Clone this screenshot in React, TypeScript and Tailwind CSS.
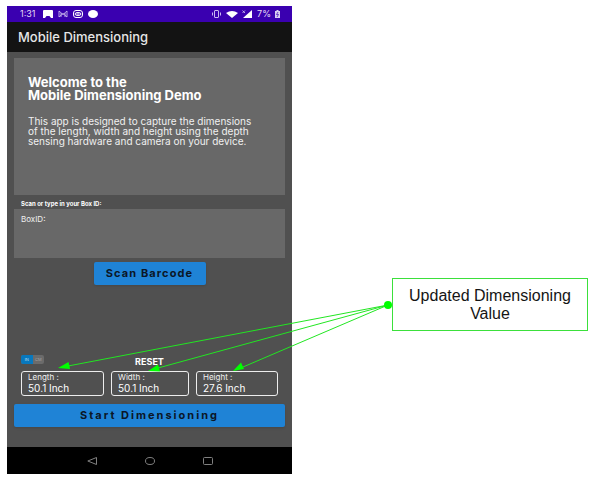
import { useState } from "react";

const readings = [
  { id: "length", label: "Length :", value: "50.1 Inch" },
  { id: "width", label: "Width :", value: "50.1 Inch" },
  { id: "height", label: "Height :", value: "27.6 Inch" },
];

function StatusBar() {
  return (
    <div className="flex h-4 items-center justify-between bg-[#3a00b0] pr-3 pl-[13px] text-[9px] leading-4 text-[#e4dcf5]">
      <div className="flex items-center gap-[5px]">
        <span className="pr-[3px]">1:31</span>
        <svg className="h-2 w-2.5" viewBox="0 0 10 8" aria-hidden="true">
          <path d="M1 0h8q1 0 1 1v7H8L6.500 6h-3L2 8H0V1q0-1 1-1z" fill="#fff" />
        </svg>
        <svg className="h-2 w-2.5" viewBox="0 0 10 8" fill="none" stroke="#d8ccf2" strokeWidth=".8" aria-hidden="true">
          <path d="M1 7V1l4 3.500L9 1v6M3 7V3M7 7V3M1 7l4-3.500L9 7" />
        </svg>
        <svg className="h-2 w-2.5" viewBox="0 0 10 8" fill="none" stroke="#fff" aria-hidden="true">
          <rect x=".5" y=".5" width="9" height="7" rx="2.500" />
          <ellipse cx="5" cy="4" rx="3" ry="1.500" />
          <path d="M3.500 4h3" />
        </svg>
        <svg className="h-2 w-2.5" viewBox="0 0 10 8" aria-hidden="true">
          <ellipse cx="5" cy="4" rx="5" ry="4" fill="#fff" />
        </svg>
      </div>
      <div className="flex items-center gap-1">
        <svg className="mr-px h-2 w-[9px]" viewBox="0 0 9 8" fill="none" stroke="#c9b8f0" aria-hidden="true">
          <rect x="2.500" y=".5" width="4" height="7" rx=".5" />
          <path d="M.5 2.500v3M8.500 2.500v3" />
        </svg>
        <svg className="h-[7px] w-3" viewBox="0 0 12 7" aria-hidden="true">
          <path d="M0 2Q6-2 12 2L6 7z" fill="#fff" />
        </svg>
        <svg className="h-2 w-[10px]" viewBox="0 0 10 8" aria-hidden="true">
          <path d="M10 0v8H1z" fill="#fff" />
          <path d="M.5.5l2.500 2.500M3 .5L.5 3" stroke="#d8ccf2" strokeWidth=".8" />
        </svg>
        <span className="pl-px">7%</span>
        <svg className="h-2 w-[5px]" viewBox="0 0 5 8" aria-hidden="true">
          <path d="M0 1h1.500V0h2v1H5v7H0z" fill="#d8ccf2" />
          <path d="M3 2L1.500 4.500h2L2 7" stroke="#3a00b0" strokeWidth=".7" fill="none" />
        </svg>
      </div>
    </div>
  );
}

function UnitSwitch() {
  const [unit, setUnit] = useState("IN");
  return (
    <fieldset className="flex h-[9px] w-[23px] overflow-hidden rounded-xs bg-[#6b6b6b] text-[4px] leading-[9px]">
      {["IN", "CM"].map((name) => (
        <label
          key={name}
          className={
            unit === name
              ? "relative flex-1 bg-[#0878bd] text-center text-[#b9def5]"
              : "relative flex-1 text-center text-[#a5a5a5]"
          }
        >
          <input
            type="radio"
            name="unit"
            className="sr-only"
            checked={unit === name}
            onChange={() => setUnit(name)}
          />
          {name}
        </label>
      ))}
    </fieldset>
  );
}

function Phone() {
  return (
    <div className="flex flex-col bg-[#505050] font-[Inter,Roboto,sans-serif] text-white">
      <StatusBar />
      <header className="flex h-[30px] items-center bg-[#131313] px-[11px] pt-0.5">
        <h1 className="text-[13px] font-medium text-[#e6e6e6]">Mobile Dimensioning</h1>
      </header>
      <main className="flex flex-col px-[7px] pt-1.5 pb-5">
        <section className="h-[137px] bg-[#686868] px-3.5 pt-[18px]">
          <h2 className="text-[13px] leading-[13px] font-bold whitespace-nowrap">
            Welcome to the
            <br />
            Mobile Dimensioning Demo
          </h2>
          <p className="pt-3.5 text-[10px] leading-[10px] whitespace-nowrap text-[#f0f0f0]">
            This app is designed to capture the dimensions
            <br />
            of the length, width and height using the depth
            <br />
            sensing hardware and camera on your device.
          </p>
        </section>
        <label htmlFor="box-id" className="px-[7px] pt-1 text-[6px] leading-[10px] font-bold">
          Scan or type in your Box ID:
        </label>
        <textarea
          id="box-id"
          placeholder="BoxID:"
          className="block h-[49px] w-full resize-none bg-[#686868] px-[7px] pt-1.5 text-[8px] leading-2 outline-none placeholder:text-[#f0f0f0]"
        />
        <button className="mt-1 h-[23px] w-28 self-center rounded-xs bg-[#1f83d6] text-[11px] font-bold tracking-widest whitespace-nowrap text-[#0b1626] shadow-sm">
          Scan Barcode
        </button>
        <div className="mt-[70px] grid h-4 grid-cols-3 px-[7px]">
          <UnitSwitch />
          <button className="self-start justify-self-center text-[9px] leading-[14px] font-bold">RESET</button>
        </div>
        <div className="grid grid-cols-[83fr_78fr_82fr] gap-[7px] px-[7px]">
          {readings.map((r) => (
            <div key={r.id} className="flex h-[25px] flex-col rounded-[3px] border border-[#ededed] px-1.5 whitespace-nowrap">
              <label htmlFor={r.id} className="text-[8px] leading-[10px] text-[#f0f0f0]">
                {r.label}
              </label>
              <output id={r.id} className="text-[10px] leading-3">
                {r.value}
              </output>
            </div>
          ))}
        </div>
        <button className="mt-2 h-[23px] rounded-xs bg-[#1f83d6] text-[11px] font-bold tracking-[2px] text-[#0b1626] shadow-sm">
          Start Dimensioning
        </button>
      </main>
      <nav className="flex h-[27px] items-center justify-center gap-12 bg-black text-[#808080]">
        <button aria-label="Back">
          <svg className="h-2 w-2.5" viewBox="0 0 10 8" fill="none" stroke="currentColor">
            <path d="M9.500.5v7L.8 4z" />
          </svg>
        </button>
        <button aria-label="Home">
          <svg className="h-2 w-2.5" viewBox="0 0 10 8" fill="none" stroke="currentColor">
            <ellipse cx="5" cy="4" rx="4.500" ry="3.500" />
          </svg>
        </button>
        <button aria-label="Recent apps">
          <svg className="h-2 w-2.5" viewBox="0 0 10 8" fill="none" stroke="currentColor">
            <rect x=".5" y=".5" width="9" height="7" rx="1" />
          </svg>
        </button>
      </nav>
    </div>
  );
}

function Arrows() {
  return (
    <svg
      className="pointer-events-none absolute inset-0 h-full w-full"
      viewBox="0 0 581 468"
      preserveAspectRatio="none"
      aria-hidden="true"
    >
      <g stroke="#22e622" strokeWidth="1">
        <path d="M381 299L61 360M381 299L151 362M381 299L236 361" fill="none" />
      </g>
      <g fill="#00ff00">
        <circle cx="381" cy="299" r="4" />
        <path d="M51 362l10.500-6 1.500 7z" />
        <path d="M141 365l10-6.500 2 7z" />
        <path d="M226 365l8-8.500 3 6.500z" />
      </g>
    </svg>
  );
}

export default function App() {
  return (
    <div className="min-h-screen bg-white pt-1.5 pr-[9px] pb-1.5 pl-[7px]">
      <div className="relative grid grid-cols-[minmax(0,285fr)_minmax(0,100fr)_minmax(0,196fr)]">
        <Phone />
        <aside className="col-start-3 mt-[272px] self-start border border-[#3be03b] bg-white px-2 pt-2 pb-[7px] text-center font-['Liberation_Sans',Arial,sans-serif] text-base leading-[18px] text-[#151515]">
          Updated Dimensioning Value
        </aside>
        <Arrows />
      </div>
    </div>
  );
}
